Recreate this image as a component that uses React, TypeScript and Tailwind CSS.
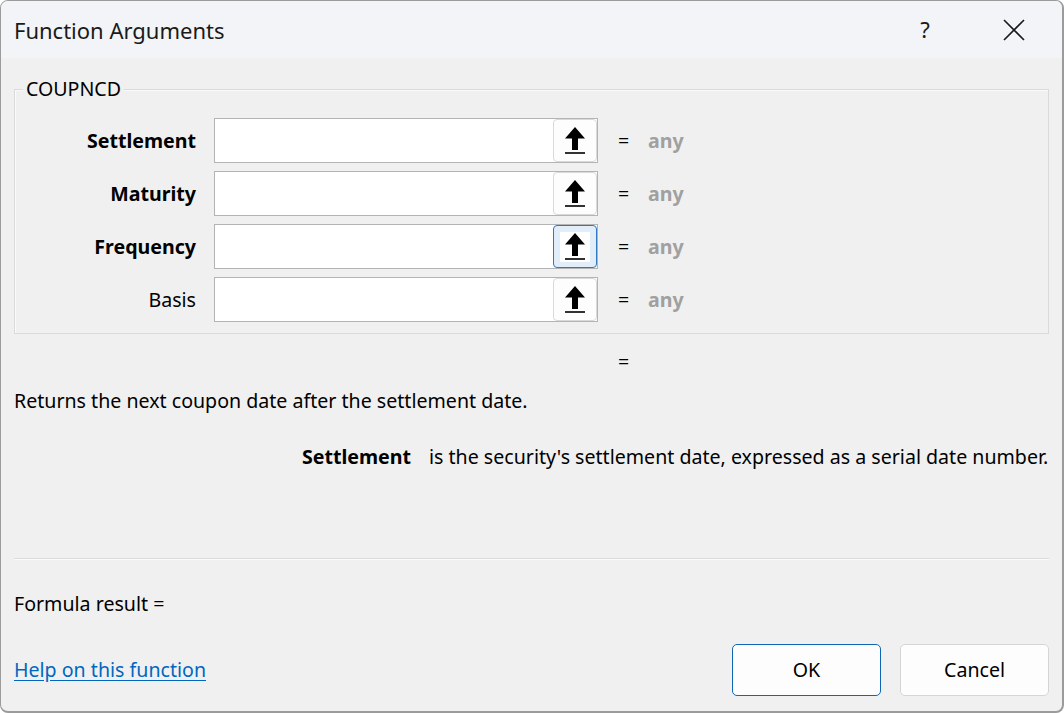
import React from "react";

const font = { fontFamily: '"Noto Sans", "Open Sans", Arial, sans-serif' };

function ArrowIcon() {
  return (
    <svg width="22" height="28" viewBox="0 0 22 28">
      <path d="M11 0 L1 11.5 L8 11.5 L8 23 L14 23 L14 11.5 L21 11.5 Z" fill="#000" />
      <rect x="1" y="25.2" width="20" height="1.6" fill="#000" />
    </svg>
  );
}

function Row({ label, bold, focused }: { label: string; bold?: boolean; focused?: boolean }) {
  return (
    <div className="flex items-center h-[45px]">
      <div className={`w-[181px] text-right ${bold ? "font-bold" : ""} text-black`}>{label}</div>
      <div className="ml-[18px] w-[384px] h-[45px] border border-[#b4b4b4] bg-white flex justify-end items-center">
        <div
          className={`w-[44px] h-[43px] rounded-[4px] border flex items-center justify-center ${
            focused ? "border-[#2f77bf] bg-[#e1eefa]" : "border-[#d9d9d9] bg-[#fdfdfd]"
          }`}
        >
          <div className={`flex items-center justify-center w-[30px] h-[30px] pt-[1px] ${focused ? "bg-white" : ""}`}>
            <ArrowIcon />
          </div>
        </div>
      </div>
      <div className="ml-[20px] w-[30px] text-black">=</div>
      <div className="text-[#a0a0a0] font-bold">any</div>
    </div>
  );
}

export default function App() {
  return (
    <div className="w-[1064px] h-[713px] bg-white" style={font}>
      <div className="w-full h-full rounded-[8px] border border-[#9b9b9b] border-r-2 border-b-2 overflow-hidden bg-[#f0f0f0] flex flex-col text-[19.6px] text-[#1a1a1a]">
        <div className="h-[57px] bg-[#f2f4f8] flex items-center px-[13px] shrink-0">
          <div className="text-[22px] text-[#1a1a1a] flex-1 pt-[1px]">Function Arguments</div>
          <div className="w-[20px] text-center text-[22px] mr-[68px]">?</div>
          <svg width="22" height="22" viewBox="0 0 22 22" className="mr-[24px]">
            <path d="M1 1 L21 21 M21 1 L1 21" stroke="#1a1a1a" strokeWidth="1.6" />
          </svg>
        </div>
        <div className="flex flex-col px-[13px] flex-1">
          <div className="relative mt-[31px] h-[245px] border border-[#dadada] shadow-[inset_1px_1px_0_#fafafa] shrink-0">
            <div className="absolute left-[8px] top-[-13px] bg-[#f0f0f0] px-[3px] leading-[24px] text-black">COUPNCD</div>
            <div className="flex flex-col gap-[8px] pt-[28px]">
              <Row label="Settlement" bold />
              <Row label="Maturity" bold />
              <Row label="Frequency" bold focused />
              <Row label="Basis" />
            </div>
          </div>
          <div className="h-[30px] mt-[13px] pl-[604px] leading-[30px] text-black">=</div>
          <div className="h-[30px] mt-[9px] leading-[30px] text-black">Returns the next coupon date after the settlement date.</div>
          <div className="flex mt-[26px] h-[30px] leading-[30px] text-black">
            <div className="w-[397px] text-right font-bold">Settlement</div>
            <div className="ml-[18px] whitespace-nowrap">is the security's settlement date, expressed as a serial date number.</div>
          </div>
          <div className="mt-[86px] h-[2px] border-t border-[#dcdcdc] border-b border-b-[#fafafa]" />
          <div className="mt-[29px] h-[30px] leading-[30px] text-black">Formula result =</div>
          <div className="flex items-center mt-[25px]">
            <a className="flex-1 text-[#0067c0] underline underline-offset-[3px]">Help on this function</a>
            <button className="w-[149px] h-[52px] rounded-[5px] border border-[#0f66b5] bg-[#fdfdfd] text-black">OK</button>
            <button className="ml-[19px] w-[149px] h-[52px] rounded-[5px] border border-[#d5d5d5] bg-[#fdfdfd] text-black">Cancel</button>
          </div>
        </div>
      </div>
    </div>
  );
}
